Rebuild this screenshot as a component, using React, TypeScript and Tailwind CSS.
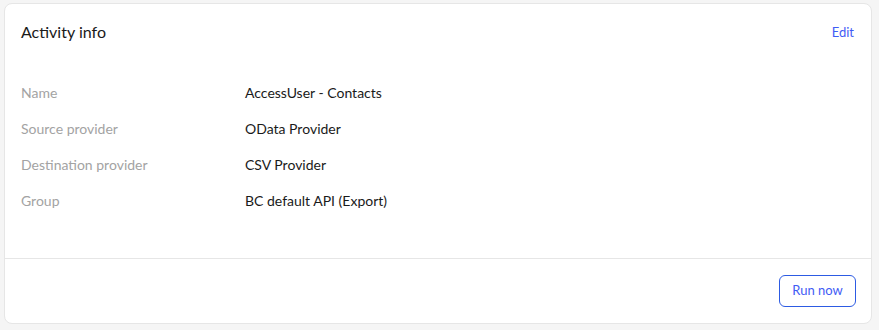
import React from 'react';

const rows = [
  { label: 'Name', value: 'AccessUser - Contacts' },
  { label: 'Source provider', value: 'OData Provider' },
  { label: 'Destination provider', value: 'CSV Provider' },
  { label: 'Group', value: 'BC default API (Export)' },
];

const App = () => {
  return (
    <div
      className="w-[879px] h-[330px] bg-[#f5f5f5] pt-[3px] pl-[4px]"
      style={{ fontFamily: 'Lato, "Noto Sans", sans-serif' }}
    >
      <div className="w-[868px] h-[321px] bg-white border border-[#e6e6e6] rounded-[8px] flex flex-col">
        <div className="flex-1 px-[16px]">
          <div className="flex items-center justify-between pt-[16px] h-[40px]">
            <h2 className="text-[16px] leading-[24px] text-[#1a1a1a] font-normal">
              Activity info
            </h2>
            <button className="text-[13px] leading-[20px] text-[#3f5cf5] mr-[1px]">Edit</button>
          </div>
          <div className="mt-[30px]">
            {rows.map(row => (
              <div key={row.label} className="flex items-center h-[36px] text-[14px]">
                <div className="w-[224px] text-[#a3a3a3]">{row.label}</div>
                <div className="text-[#1a1a1a]">{row.value}</div>
              </div>
            ))}
          </div>
        </div>
        <div className="border-t border-[#e6e6e6] flex justify-end px-[15px] py-[16px]">
          <button className="h-[32px] w-[77px] rounded-[6px] border border-[#2d5be3] text-[13px] text-[#3f5cf5]">
            Run now
          </button>
        </div>
      </div>
    </div>
  );
};

export default App;
